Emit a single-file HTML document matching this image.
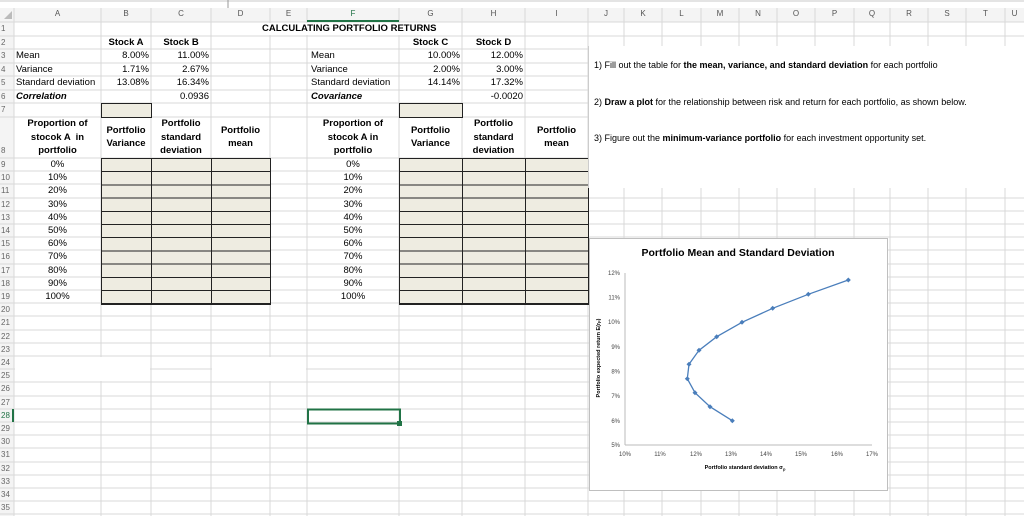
<!DOCTYPE html>
<html><head><meta charset="utf-8"><style>
html,body{margin:0;padding:0;background:#fff;}
body{width:1024px;height:516px;position:relative;overflow:hidden;font-family:"Liberation Sans",sans-serif;color:#000;}
.c{position:absolute;font-size:9.5px;white-space:nowrap;line-height:13px;}
.r{text-align:right;}
.m{text-align:center;}
.b{font-weight:bold;}
.h{position:absolute;font-size:8px;color:#555;text-align:center;}
.g{position:absolute;background:#eeece1;border:1px solid #222;box-sizing:border-box;}
.rn{position:absolute;left:0;width:12px;font-size:8px;color:#666;text-align:left;padding-left:1px;}
</style></head><body>
<svg width="1024" height="516" style="position:absolute;left:0;top:0">
<rect x="0" y="0" width="1024" height="8" fill="#fff"/>
<line x1="0" y1="1" x2="1024" y2="1" stroke="#c8c8c8"/>
<line x1="228" y1="0" x2="228" y2="8" stroke="#999"/>
<rect x="0" y="8" width="1024" height="14" fill="#f4f4f4"/>
<rect x="0" y="8" width="14" height="508" fill="#f4f4f4"/>
<polygon points="4,19 12,19 12,11" fill="#bbb"/>
<g stroke="#d9d9d9" stroke-width="1">
<line x1="14" y1="8" x2="14" y2="516"/><line x1="101" y1="8" x2="101" y2="516"/><line x1="151" y1="8" x2="151" y2="516"/><line x1="211" y1="8" x2="211" y2="516"/><line x1="270" y1="8" x2="270" y2="516"/><line x1="307" y1="8" x2="307" y2="516"/><line x1="399" y1="8" x2="399" y2="516"/><line x1="462" y1="8" x2="462" y2="516"/><line x1="525" y1="8" x2="525" y2="516"/><line x1="588" y1="8" x2="588" y2="516"/><line x1="624" y1="8" x2="624" y2="516"/><line x1="662" y1="8" x2="662" y2="516"/><line x1="701" y1="8" x2="701" y2="516"/><line x1="739" y1="8" x2="739" y2="516"/><line x1="777" y1="8" x2="777" y2="516"/><line x1="815" y1="8" x2="815" y2="516"/><line x1="854" y1="8" x2="854" y2="516"/><line x1="890" y1="8" x2="890" y2="516"/><line x1="928" y1="8" x2="928" y2="516"/><line x1="966" y1="8" x2="966" y2="516"/><line x1="1005" y1="8" x2="1005" y2="516"/>
<line x1="0" y1="22" x2="1024" y2="22"/><line x1="0" y1="36" x2="1024" y2="36"/><line x1="0" y1="49" x2="1024" y2="49"/><line x1="0" y1="63" x2="1024" y2="63"/><line x1="0" y1="76" x2="1024" y2="76"/><line x1="0" y1="90" x2="1024" y2="90"/><line x1="0" y1="103" x2="1024" y2="103"/><line x1="0" y1="117" x2="1024" y2="117"/><line x1="0" y1="158" x2="1024" y2="158"/><line x1="0" y1="171" x2="1024" y2="171"/><line x1="0" y1="184" x2="1024" y2="184"/><line x1="0" y1="198" x2="1024" y2="198"/><line x1="0" y1="211" x2="1024" y2="211"/><line x1="0" y1="224" x2="1024" y2="224"/><line x1="0" y1="237" x2="1024" y2="237"/><line x1="0" y1="250" x2="1024" y2="250"/><line x1="0" y1="264" x2="1024" y2="264"/><line x1="0" y1="277" x2="1024" y2="277"/><line x1="0" y1="290" x2="1024" y2="290"/><line x1="0" y1="303" x2="1024" y2="303"/><line x1="0" y1="316" x2="1024" y2="316"/><line x1="0" y1="330" x2="1024" y2="330"/><line x1="0" y1="343" x2="1024" y2="343"/><line x1="0" y1="356" x2="1024" y2="356"/><line x1="0" y1="369" x2="1024" y2="369"/><line x1="0" y1="382" x2="1024" y2="382"/><line x1="0" y1="396" x2="1024" y2="396"/><line x1="0" y1="409" x2="1024" y2="409"/><line x1="0" y1="422" x2="1024" y2="422"/><line x1="0" y1="435" x2="1024" y2="435"/><line x1="0" y1="448" x2="1024" y2="448"/><line x1="0" y1="462" x2="1024" y2="462"/><line x1="0" y1="475" x2="1024" y2="475"/><line x1="0" y1="488" x2="1024" y2="488"/><line x1="0" y1="501" x2="1024" y2="501"/><line x1="0" y1="514" x2="1024" y2="514"/>
</g>
<rect x="262" y="23" width="150" height="12" fill="#fff"/>
<rect x="15" y="357" width="135" height="24" fill="#fff"/>
<rect x="212" y="357" width="94" height="24" fill="#fff"/>
<line x1="307" y1="21" x2="399" y2="21" stroke="#217346" stroke-width="2"/>
<line x1="13" y1="409" x2="13" y2="422" stroke="#217346" stroke-width="2"/>
<rect x="308" y="409.5" width="92" height="14" fill="none" stroke="#217346" stroke-width="2"/>
<rect x="397" y="421" width="5" height="5" fill="#217346"/>
</svg>
<div class="h" style="left:14px;width:87px;top:9px">A</div><div class="h" style="left:101px;width:50px;top:9px">B</div><div class="h" style="left:151px;width:60px;top:9px">C</div><div class="h" style="left:211px;width:59px;top:9px">D</div><div class="h" style="left:270px;width:37px;top:9px">E</div><div class="h" style="left:307px;width:92px;top:9px;color:#217346">F</div><div class="h" style="left:399px;width:63px;top:9px">G</div><div class="h" style="left:462px;width:63px;top:9px">H</div><div class="h" style="left:525px;width:63px;top:9px">I</div><div class="h" style="left:588px;width:36px;top:9px">J</div><div class="h" style="left:624px;width:38px;top:9px">K</div><div class="h" style="left:662px;width:39px;top:9px">L</div><div class="h" style="left:701px;width:38px;top:9px">M</div><div class="h" style="left:739px;width:38px;top:9px">N</div><div class="h" style="left:777px;width:38px;top:9px">O</div><div class="h" style="left:815px;width:39px;top:9px">P</div><div class="h" style="left:854px;width:36px;top:9px">Q</div><div class="h" style="left:890px;width:38px;top:9px">R</div><div class="h" style="left:928px;width:38px;top:9px">S</div><div class="h" style="left:966px;width:39px;top:9px">T</div><div class="h" style="left:1005px;width:19px;top:9px">U</div>
<div class="rn" style="top:24px">1</div><div class="rn" style="top:38px">2</div><div class="rn" style="top:51px">3</div><div class="rn" style="top:65px">4</div><div class="rn" style="top:78px">5</div><div class="rn" style="top:92px">6</div><div class="rn" style="top:105px">7</div><div class="rn" style="top:146px">8</div><div class="rn" style="top:160px">9</div><div class="rn" style="top:173px">10</div><div class="rn" style="top:186px">11</div><div class="rn" style="top:200px">12</div><div class="rn" style="top:213px">13</div><div class="rn" style="top:226px">14</div><div class="rn" style="top:239px">15</div><div class="rn" style="top:252px">16</div><div class="rn" style="top:266px">17</div><div class="rn" style="top:279px">18</div><div class="rn" style="top:292px">19</div><div class="rn" style="top:305px">20</div><div class="rn" style="top:318px">21</div><div class="rn" style="top:332px">22</div><div class="rn" style="top:345px">23</div><div class="rn" style="top:358px">24</div><div class="rn" style="top:371px">25</div><div class="rn" style="top:384px">26</div><div class="rn" style="top:398px">27</div><div class="rn" style="top:411px;color:#217346">28</div><div class="rn" style="top:424px">29</div><div class="rn" style="top:437px">30</div><div class="rn" style="top:450px">31</div><div class="rn" style="top:464px">32</div><div class="rn" style="top:477px">33</div><div class="rn" style="top:490px">34</div><div class="rn" style="top:503px">35</div>

<div class="c b" style="left:262px;top:22px">CALCULATING PORTFOLIO RETURNS</div>
<div class="c b m" style="left:101px;width:50px;top:36px">Stock A</div>
<div class="c b m" style="left:151px;width:60px;top:36px">Stock B</div>
<div class="c b m" style="left:399px;width:63px;top:36px">Stock C</div>
<div class="c b m" style="left:462px;width:63px;top:36px">Stock D</div>
<div class="c" style="left:16px;top:49px">Mean</div><div class="c" style="left:16px;top:63px">Variance</div><div class="c" style="left:16px;top:76px">Standard deviation</div><div class="c b" style="left:16px;top:90px;font-style:italic">Correlation</div>
<div class="c" style="left:311px;top:49px">Mean</div><div class="c" style="left:311px;top:63px">Variance</div><div class="c" style="left:311px;top:76px">Standard deviation</div><div class="c b" style="left:311px;top:90px;font-style:italic">Covariance</div>
<div class="c r" style="left:101px;width:48px;top:49px">8.00%</div><div class="c r" style="left:101px;width:48px;top:63px">1.71%</div><div class="c r" style="left:101px;width:48px;top:76px">13.08%</div>
<div class="c r" style="left:151px;width:58px;top:49px">11.00%</div><div class="c r" style="left:151px;width:58px;top:63px">2.67%</div><div class="c r" style="left:151px;width:58px;top:76px">16.34%</div><div class="c r" style="left:151px;width:58px;top:90px">0.0936</div>
<div class="c r" style="left:399px;width:61px;top:49px">10.00%</div><div class="c r" style="left:399px;width:61px;top:63px">2.00%</div><div class="c r" style="left:399px;width:61px;top:76px">14.14%</div>
<div class="c r" style="left:462px;width:61px;top:49px">12.00%</div><div class="c r" style="left:462px;width:61px;top:63px">3.00%</div><div class="c r" style="left:462px;width:61px;top:76px">17.32%</div><div class="c r" style="left:462px;width:61px;top:90px">-0.0020</div>

<div class="g" style="left:101px;top:103px;width:51px;height:15px"></div>
<div class="g" style="left:399px;top:103px;width:64px;height:15px"></div>

<div class="c b m" style="left:14px;width:87px;top:117px;line-height:13.5px">Proportion of<br>stocok A &nbsp;in<br>portfolio</div>
<div class="c b m" style="left:101px;width:50px;top:124px">Portfolio<br>Variance</div>
<div class="c b m" style="left:151px;width:60px;top:117px;line-height:13.5px">Portfolio<br>standard<br>deviation</div>
<div class="c b m" style="left:211px;width:59px;top:124px">Portfolio<br>mean</div>
<div class="c b m" style="left:307px;width:92px;top:117px;line-height:13.5px">Proportion of<br>stocok A in<br>portfolio</div>
<div class="c b m" style="left:399px;width:63px;top:124px">Portfolio<br>Variance</div>
<div class="c b m" style="left:462px;width:63px;top:117px;line-height:13.5px">Portfolio<br>standard<br>deviation</div>
<div class="c b m" style="left:525px;width:63px;top:124px">Portfolio<br>mean</div>

<div class="g" style="left:101px;top:158px;width:51px;height:147px;background:repeating-linear-gradient(#eeece1 0,#eeece1 12.2px,#222 12.2px,#222 13.2px)"></div>
<div class="g" style="left:151px;top:158px;width:61px;height:147px;background:repeating-linear-gradient(#eeece1 0,#eeece1 12.2px,#222 12.2px,#222 13.2px)"></div>
<div class="g" style="left:211px;top:158px;width:60px;height:147px;background:repeating-linear-gradient(#eeece1 0,#eeece1 12.2px,#222 12.2px,#222 13.2px)"></div>
<div class="g" style="left:399px;top:158px;width:64px;height:147px;background:repeating-linear-gradient(#eeece1 0,#eeece1 12.2px,#222 12.2px,#222 13.2px)"></div>
<div class="g" style="left:462px;top:158px;width:64px;height:147px;background:repeating-linear-gradient(#eeece1 0,#eeece1 12.2px,#222 12.2px,#222 13.2px)"></div>
<div class="g" style="left:525px;top:158px;width:64px;height:147px;background:repeating-linear-gradient(#eeece1 0,#eeece1 12.2px,#222 12.2px,#222 13.2px)"></div>

<div class="c m" style="left:14px;width:87px;top:158px;line-height:13.2px">0%<br>10%<br>20%<br>30%<br>40%<br>50%<br>60%<br>70%<br>80%<br>90%<br>100%</div>
<div class="c m" style="left:307px;width:92px;top:158px;line-height:13.2px">0%<br>10%<br>20%<br>30%<br>40%<br>50%<br>60%<br>70%<br>80%<br>90%<br>100%</div>

<div style="position:absolute;left:588px;top:46px;width:436px;height:142px;background:#fff;border-left:1px solid #ccc;"></div>
<div class="c" style="left:594px;top:59px;font-size:9px">1) Fill out the table for <b>the mean, variance, and standard deviation</b> for each portfolio</div>
<div class="c" style="left:594px;top:96px;font-size:9px">2) <b>Draw a plot</b> for the relationship between risk and return for each portfolio, as shown below.</div>
<div class="c" style="left:594px;top:132px;font-size:9px">3) Figure out the <b>minimum-variance portfolio</b> for each investment opportunity set.</div>

<svg width="300" height="254" style="position:absolute;left:589px;top:238px" viewBox="589 238 300 254">
<rect x="589.5" y="238.5" width="298" height="252" fill="#fff" stroke="#bfbfbf"/>
<text x="738" y="256" font-family="Liberation Sans" font-size="10.5" font-weight="bold" text-anchor="middle">Portfolio Mean and Standard Deviation</text>
<line x1="625" y1="273" x2="625" y2="445" stroke="#bbb"/>
<line x1="625" y1="445" x2="872" y2="445" stroke="#bbb"/>
<g font-family="Liberation Sans" font-size="6" fill="#444" text-anchor="end">
<text x="620" y="275">12%</text><text x="620" y="299.5">11%</text><text x="620" y="324">10%</text><text x="620" y="349">9%</text><text x="620" y="373.5">8%</text><text x="620" y="398">7%</text><text x="620" y="423">6%</text><text x="620" y="447">5%</text>
</g>
<g font-family="Liberation Sans" font-size="6" fill="#444" text-anchor="middle">
<text x="625" y="456">10%</text><text x="660" y="456">11%</text><text x="696" y="456">12%</text><text x="731" y="456">13%</text><text x="766" y="456">14%</text><text x="801" y="456">15%</text><text x="837" y="456">16%</text><text x="872" y="456">17%</text>
</g>
<text x="745" y="469" font-family="Liberation Sans" font-size="5.5" font-weight="bold" text-anchor="middle">Portfolio standard deviation σ<tspan font-size="4" dy="1.5">p</tspan></text>
<text transform="translate(600,358) rotate(-90)" font-family="Liberation Sans" font-size="5.5" font-weight="bold" text-anchor="middle">Portfolio expected return E(r<tspan font-size="4">p</tspan>)</text>
<polyline fill="none" stroke="#4a7ebb" stroke-width="1.3" points="848.3,280 808.3,294.3 772.7,308.3 742,322.3 716.7,336.7 699,350.3 689,364.3 687.3,378.7 695,392.7 710,406.7 732.3,420.7"/>
<g fill="#4a7ebb">
<path d="M848.3,277.5l2.5,2.5l-2.5,2.5l-2.5,-2.5z"/><path d="M808.3,291.8l2.5,2.5l-2.5,2.5l-2.5,-2.5z"/><path d="M772.7,305.8l2.5,2.5l-2.5,2.5l-2.5,-2.5z"/><path d="M742,319.8l2.5,2.5l-2.5,2.5l-2.5,-2.5z"/><path d="M716.7,334.2l2.5,2.5l-2.5,2.5l-2.5,-2.5z"/><path d="M699,347.8l2.5,2.5l-2.5,2.5l-2.5,-2.5z"/><path d="M689,361.8l2.5,2.5l-2.5,2.5l-2.5,-2.5z"/><path d="M687.3,376.2l2.5,2.5l-2.5,2.5l-2.5,-2.5z"/><path d="M695,390.2l2.5,2.5l-2.5,2.5l-2.5,-2.5z"/><path d="M710,404.2l2.5,2.5l-2.5,2.5l-2.5,-2.5z"/><path d="M732.3,418.2l2.5,2.5l-2.5,2.5l-2.5,-2.5z"/>
</g>
</svg>
</body></html>
